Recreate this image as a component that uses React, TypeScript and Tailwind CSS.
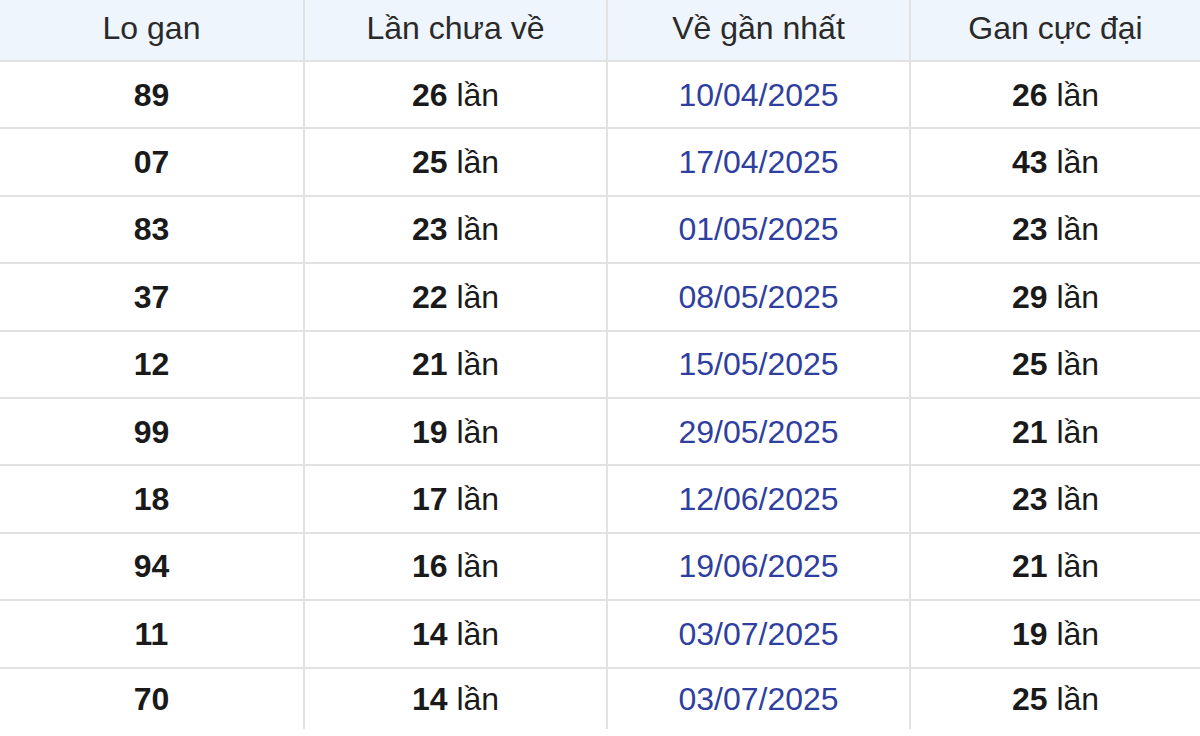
import React from "react";

const rows: [string, string, string, string][] = [
  ["89", "26", "10/04/2025", "26"],
  ["07", "25", "17/04/2025", "43"],
  ["83", "23", "01/05/2025", "23"],
  ["37", "22", "08/05/2025", "29"],
  ["12", "21", "15/05/2025", "25"],
  ["99", "19", "29/05/2025", "21"],
  ["18", "17", "12/06/2025", "23"],
  ["94", "16", "19/06/2025", "21"],
  ["11", "14", "03/07/2025", "19"],
  ["70", "14", "03/07/2025", "25"],
];

export default function App() {
  return (
    <div
      className="w-[1200px] h-[736px] bg-white overflow-hidden text-[32px] text-[#1a1a1a]"
      style={{ fontFamily: '"Liberation Sans", Arial, sans-serif' }}
    >
      <div className="flex h-[62px] bg-[#eef5fc] border-b-2 border-[#e2e2e2] text-[#2a2a2a]">
        <div className="w-[305px] border-r-2 border-[#e2e2e2] flex items-center justify-center pb-[4px]">Lo gan</div>
        <div className="w-[303px] border-r-2 border-[#e2e2e2] flex items-center justify-center pb-[4px]">Lần chưa về</div>
        <div className="w-[303px] border-r-2 border-[#e2e2e2] flex items-center justify-center pb-[4px]">Về gần nhất</div>
        <div className="flex-1 flex items-center justify-center pb-[4px]">Gan cực đại</div>
      </div>
      {rows.map((r, i) => {
        const last = i === rows.length - 1;
        return (
          <div
            key={i}
            className={
              last
                ? "flex h-[60px]"
                : "flex h-[67.4px] border-b-2 border-[#e2e2e2]"
            }
          >
            <div className="w-[305px] border-r-2 border-[#e2e2e2] flex items-center justify-center font-bold">
              {r[0]}
            </div>
            <div className="w-[303px] border-r-2 border-[#e2e2e2] flex items-center justify-center">
              <span className="font-bold">{r[1]}</span>&nbsp;lần
            </div>
            <div className="w-[303px] border-r-2 border-[#e2e2e2] flex items-center justify-center text-[#2f3fa0]">
              {r[2]}
            </div>
            <div className="flex-1 flex items-center justify-center">
              <span className="font-bold">{r[3]}</span>&nbsp;lần
            </div>
          </div>
        );
      })}
    </div>
  );
}
